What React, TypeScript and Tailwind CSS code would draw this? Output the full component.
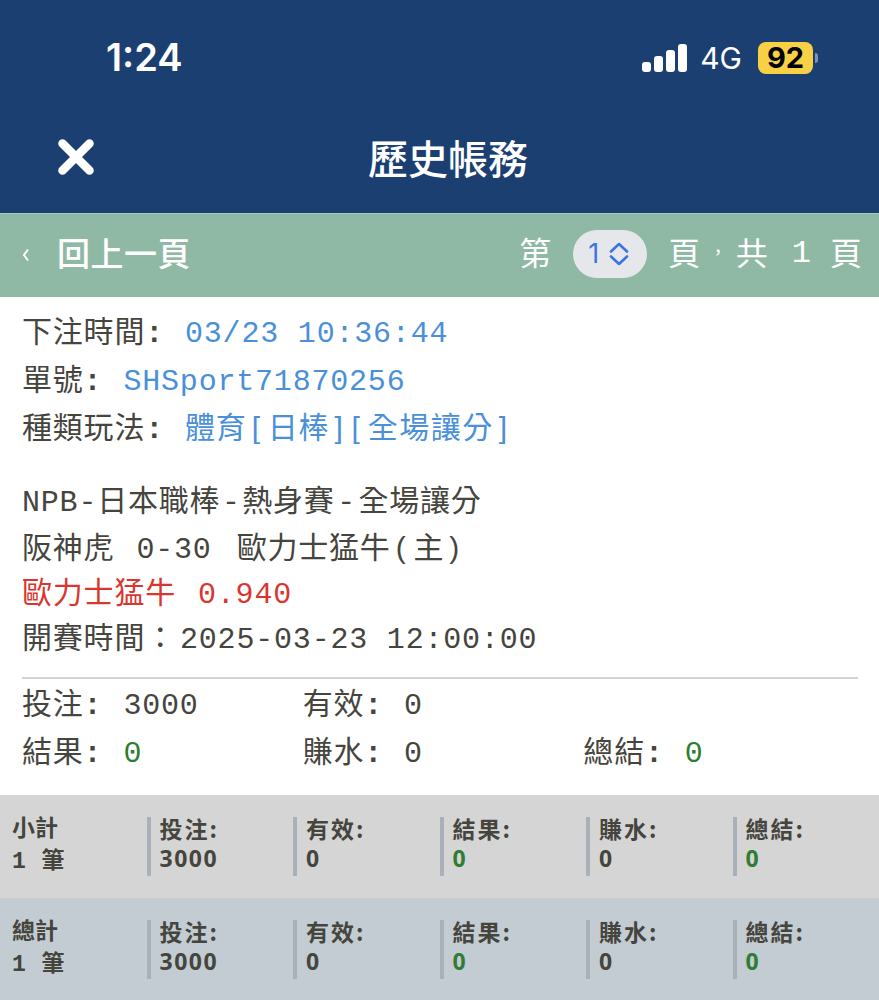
import React from 'react'

const mono = "font-['Liberation_Mono','Noto_Sans_CJK_TC',monospace]"
const cjk = "font-['Noto_Sans_CJK_TC',sans-serif]"
const sans = "font-['Liberation_Sans',sans-serif]"

const summaryColumns = [
  { label: '投注:', value: '3000' },
  { label: '有效:', value: '0' },
  { label: '結果:', value: '0', green: true },
  { label: '賺水:', value: '0' },
  { label: '總結:', value: '0', green: true },
]

const SummaryRow: React.FC<{ title: string; className: string }> = ({ title, className }) => (
  <div className={`grid grid-cols-6 pt-[22px] ${className}`}>
    <div className="pl-3 text-[23px] leading-[30px] font-bold text-[#45453e]">
      <div className={`-mt-[6px] ${cjk}`}>{title}</div>
      <div className={`mt-[6px] tracking-[1px] ${mono}`}>1 筆</div>
    </div>
    {summaryColumns.map((col) => (
      <div
        key={col.label}
        className={`h-[59px] border-l-4 border-[#a9b0b9] pl-[9px] text-[23px] leading-[30px] font-bold tracking-[2px] text-[#45453e] ${cjk}`}
      >
        <div className="-mt-[4px]">{col.label}</div>
        <div className={`tracking-[1.5px] font-['Open_Sans','Noto_Sans_CJK_TC',sans-serif] ${col.green ? 'text-[#2e7d32]' : ''}`}>
          {col.value}
        </div>
      </div>
    ))}
  </div>
)

const Label: React.FC<{ text: string }> = ({ text }) => (
  <>
    {text}
    <b>:</b>
  </>
)

const Value: React.FC<{ children: React.ReactNode; className?: string }> = ({ children, className = '' }) => (
  <span className={`ml-[21px] ${className}`}>{children}</span>
)

const Open: React.FC<{ char?: string }> = ({ char = '[' }) => (
  <span className={`mr-[7px] ml-[5px] leading-[0] ${sans}`}>{char}</span>
)
const Close: React.FC<{ char?: string }> = ({ char = ']' }) => (
  <span className={`mr-[3px] ml-[5px] leading-[0] ${sans}`}>{char}</span>
)

export default function App() {
  return (
    <div className={`flex h-[1000px] w-[879px] flex-col overflow-hidden bg-white text-[#45453e] ${mono}`}>
      <header className="h-[213px] bg-[#1c3f72] text-white">
        <div className="flex h-[116px] items-start justify-between pt-[36px] pr-[61px] pl-[106px]">
          <span className="font-['Inter',sans-serif] text-[38px] leading-[42px] font-semibold">1:24</span>
          <div className="flex items-center pt-[5px]">
            <svg width="45" height="28" viewBox="0 0 45 28" fill="white">
              <rect x="0" y="18" width="9" height="10" rx="3" />
              <rect x="12" y="12" width="9" height="16" rx="3" />
              <rect x="24" y="6" width="9" height="22" rx="3" />
              <rect x="36" y="0" width="9" height="28" rx="3" />
            </svg>
            <span className="ml-[13px] font-['Inter',sans-serif] text-[30px] leading-[34px]">4G</span>
            <span className="ml-[16px] flex h-[32px] w-[55px] items-center justify-center rounded-[8px] bg-[#f7d046] font-['Inter',sans-serif] text-[29px] font-bold text-black">
              92
            </span>
            <span className="ml-[2px] h-[10px] w-[3px] rounded-r-full bg-[#7e93b0]" />
          </div>
        </div>
        <div className="relative flex h-[85px] items-center justify-center">
          <svg className="absolute top-[23px] left-[58px]" width="36" height="36" viewBox="0 0 36 36" fill="none" stroke="white" strokeWidth="8.5" strokeLinecap="round">
            <path d="M4.5 4.5 31.5 31.5M31.5 4.5 4.5 31.5" />
          </svg>
          <span className={`-mt-[3px] ml-[17px] text-[40px] leading-[50px] font-medium ${cjk}`}>歷史帳務</span>
        </div>
      </header>

      <nav className="flex h-[84px] items-center justify-between border-t border-[#a9c9ba] bg-[#8fb9a5] pr-[17px] pb-[4px] pl-[22px] text-white">
        <div className="mb-[4px] flex items-center">
          <svg width="8" height="14" viewBox="0 0 8 14" fill="none" stroke="white" strokeWidth="2" className="mt-[7px]">
            <path d="M6 1.5 2 7l4 5.5" />
          </svg>
          <span className={`ml-[27px] text-[33px] leading-[40px] font-medium tracking-[0.5px] ${cjk}`}>回上一頁</span>
        </div>
        <div className={`flex items-center text-[32px] leading-[40px] ${cjk}`}>
          <span className="mb-[5px]">第</span>
          <span className="ml-[22px] flex h-[48px] w-[74px] items-center rounded-full bg-[#e6e7eb] pl-[15px] font-['Inter',sans-serif] text-[27px] text-[#3b74e0]">
            1
            <svg width="24" height="26" viewBox="0 0 24 26" fill="none" stroke="#3b74e0" strokeWidth="2.6" strokeLinecap="round" strokeLinejoin="round" className="ml-[8px]">
              <path d="M4 10.5 12 3l8 7.5M4 15.5l8 7.5 8-7.5" />
            </svg>
          </span>
          <span className="mb-[5px] ml-[21px]">頁</span>
          <span className="ml-[15px] -translate-y-[10px] text-[20px]">,</span>
          <span className="mb-[5px] ml-[15px]">共</span>
          <span className={`ml-[24px] font-light ${mono}`}>1</span>
          <span className="mb-[5px] ml-[19px]">頁</span>
        </div>
      </nav>

      <main className="flex-1 px-[22px] pt-[13px] text-[30px] tracking-[0.8px]">
        <div className="leading-[48px]">
          <div className="h-[48px]">
            <Label text="下注時間" />
            <Value className="text-[#4a90d9]">03/23 10:36:44</Value>
          </div>
          <div className="h-[48px]">
            <Label text="單號" />
            <Value className="text-[#4a90d9]">SHSport71870256</Value>
          </div>
          <div className="h-[48px]">
            <Label text="種類玩法" />
            <Value className="text-[#4a90d9]">
              體育
              <Open />
              日棒
              <Close />
              <Open />
              <span className="tracking-[1.5px]">全場讓分</span>
              <Close />
            </Value>
          </div>
        </div>
        <div className="mt-[27px] leading-[45px]">
          <div className="h-[47px]">
            NPB-日本職棒<span className="mx-[1.5px]">-</span>熱身賽<span className="mx-[2.5px]">-</span>全場讓分
          </div>
          <div className="h-[45px]">
            阪神虎<span className="ml-[22px]">0-30</span>
            <span className="ml-[25px]">歐力士猛牛</span>
            <Open char="(" />
            主
            <Close char=")" />
          </div>
          <div className="h-[45px] text-[#d9362f]">
            歐力士猛牛<span className="ml-[22px]">0.940</span>
          </div>
          <div className="h-[45px]">
            開賽時間{'\uFF1A'}
            <span className="ml-[4px]">2025-03-23 12:00:00</span>
          </div>
        </div>
        <div className="mt-[14px] h-[2px] w-[836px] bg-[#d2d3d6]" />
        <div className="mt-[3px] grid w-[842px] grid-cols-3 leading-[48px]">
          <div>
            <Label text="投注" />
            <Value>3000</Value>
          </div>
          <div>
            <Label text="有效" />
            <Value>0</Value>
          </div>
          <div />
          <div>
            <Label text="結果" />
            <Value className="text-[#2e7d32]">0</Value>
          </div>
          <div>
            <Label text="賺水" />
            <Value>0</Value>
          </div>
          <div>
            <Label text="總結" />
            <Value className="text-[#2e7d32]">0</Value>
          </div>
        </div>
      </main>

      <SummaryRow title="小計" className="h-[103px] bg-[#d5d5d5]" />
      <SummaryRow title="總計" className="h-[102px] bg-[#c3cbd3]" />
    </div>
  )
}
